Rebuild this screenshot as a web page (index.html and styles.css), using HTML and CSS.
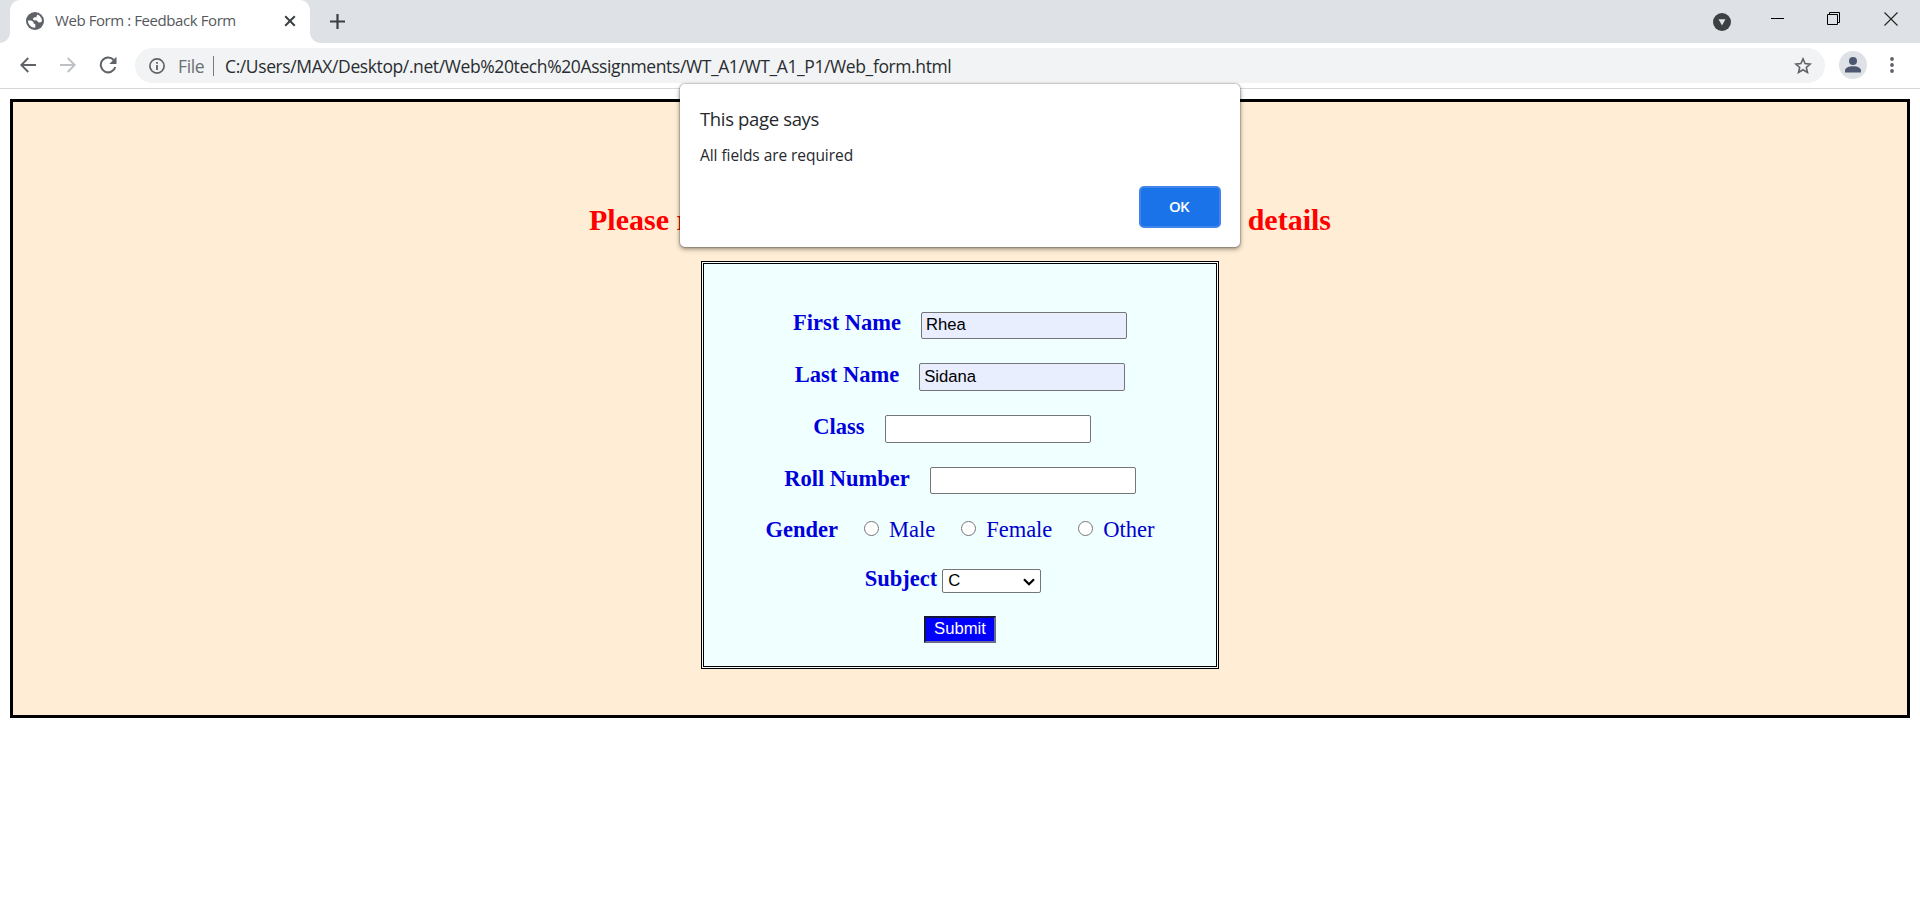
FILE: index.html
```html
<!DOCTYPE html>
<html lang="en">
<head>
<meta charset="utf-8">
<title>Web Form : Feedback Form</title>
<link rel="stylesheet" href="styles.css">
</head>
<body>
<header class="tabstrip">
  <div class="tab">
    <svg class="globe" width="18" height="18" viewBox="0 0 18 18"><circle cx="9" cy="9" r="9" fill="#5f6368"/><path d="M2 8.600h3.200l2.300 1.500v1.500l1.800.3v3.900C5 15.900 1.900 12.600 2 8.600zM11.300 2.400c2.900 1.100 4.800 3.600 4.700 6.900l-1.800 1.300-2.100-.4-1.100-1.700-3.300-.2-.9-1.500 1.500-1.600 2.100.1.300-1.500z" fill="#fff"/></svg>
    <span class="tab-title">Web Form : Feedback Form</span>
    <svg class="tab-close" width="12" height="12" viewBox="0 0 12 12"><path d="M1.200 1.200l9.600 9.600M10.800 1.200L1.200 10.800" stroke="#3c4043" stroke-width="2"/></svg>
  </div>
  <svg class="newtab" width="15" height="15" viewBox="0 0 15 15"><path d="M7.500 0v15M0 7.500h15" stroke="#3c4043" stroke-width="2.200"/></svg>
  <div class="controls">
    <svg width="18" height="18" viewBox="0 0 18 18"><circle cx="9" cy="9" r="9" fill="#3c4043"/><path d="M5.500 6.200h7L9 12.500z" fill="#dee1e6"/></svg>
    <svg class="minimize" width="13" height="13" viewBox="0 0 13 13"><path d="M0 6.500h13" stroke="#000"/></svg>
    <svg class="restore" width="13" height="13" viewBox="0 0 13 13"><path d="M.5 2.500h10v10H.5zM2.500 2.500v-2h10v10h-2" fill="none" stroke="#000"/></svg>
    <svg class="close" width="14" height="14" viewBox="0 0 14 14"><path d="M.5.500l13 13M13.500.500l-13 13" stroke="#222" stroke-width="1.100"/></svg>
  </div>
</header>
<nav class="toolbar">
  <svg class="back" width="16" height="16" viewBox="0 0 16 16"><path d="M16 8H1.500M8.300 1L1.300 8l7 7" fill="none" stroke="#5f6368" stroke-width="1.900"/></svg>
  <svg class="forward" width="16" height="16" viewBox="0 0 16 16"><path d="M0 8h14.500M7.700 1l7 7-7 7" fill="none" stroke="#bdc1c6" stroke-width="1.900"/></svg>
  <svg class="reload" width="18" height="18" viewBox="0 0 18 18"><path d="M14.700 4A7.400 7.400 0 1 0 16.300 11" fill="none" stroke="#5f6368" stroke-width="2"/><path d="M17.500.800v7.200h-7.200z" fill="#5f6368"/></svg>
  <div class="omnibox">
    <svg class="info" width="16" height="16" viewBox="0 0 16 16"><circle cx="8" cy="8" r="7.100" fill="none" stroke="#5f6368" stroke-width="1.700"/><path d="M8 7v5M8 3.900v1.800" stroke="#5f6368" stroke-width="1.800"/></svg>
    <span class="scheme">File</span>
    <span class="divider"></span>
    <span class="url">C:/Users/MAX/Desktop/.net/Web%20tech%20Assignments/WT_A1/WT_A1_P1/Web_form.html</span>
    <svg class="star" width="18" height="17" viewBox="0 0 18 17"><path d="M9 1.900l2.100 4.700 5.100.5-3.900 3.400 1.200 5L9 12.800l-4.500 2.700 1.200-5L1.800 7.100l5.100-.5z" fill="none" stroke="#5f6368" stroke-width="1.600"/></svg>
  </div>
  <svg class="avatar" width="28" height="28" viewBox="0 0 28 28"><circle cx="14" cy="14" r="14" fill="#dee1e6"/><circle cx="14" cy="10" r="4" fill="#4d5870"/><path d="M6 21.500v-2c0-2.700 4-4.200 8-4.200s8 1.500 8 4.200v2z" fill="#4d5870"/></svg>
  <svg class="menu" width="4" height="16" viewBox="0 0 4 16"><g fill="#5f6368"><circle cx="2" cy="2" r="1.900"/><circle cx="2" cy="8" r="1.900"/><circle cx="2" cy="14" r="1.900"/></g></svg>
</nav>
<main class="page">
  <h2 class="heading"><span>Please r</span><span>details</span></h2>
  <form class="form">
    <div class="row"><label>First Name</label><input class="field filled first" value="Rhea"></div>
    <div class="row"><label>Last Name</label><input class="field filled" value="Sidana"></div>
    <div class="row class-row"><label>Class</label><input class="field"></div>
    <div class="row roll"><label>Roll Number</label><input class="field short"></div>
    <div class="row gender"><label>Gender</label>
      <span class="option"><i class="radio"></i>Male</span>
      <span class="option"><i class="radio"></i>Female</span>
      <span class="option"><i class="radio"></i>Other</span>
    </div>
    <div class="row subject"><label>Subject</label>
      <div class="select"><span>C</span><svg width="12" height="8" viewBox="0 0 12 8"><path d="M1 1.200l5 5 5-5" fill="none" stroke="#000" stroke-width="2.200"/></svg></div>
    </div>
    <button class="submit" type="button">Submit</button>
  </form>
</main>
<section class="dialog">
  <div class="dialog-title">This page says</div>
  <div class="dialog-text">All fields are required</div>
  <button class="ok" type="button">OK</button>
</section>
</body>
</html>
```

FILE: styles.css
```css
* { box-sizing: border-box; }
body { margin: 0; height: 918px; overflow: hidden; background: #fff; font-family: "Open Sans", sans-serif; }
svg { display: block; flex: none; }
.tabstrip { display: flex; height: 43px; background: #dee1e6; padding-left: 10px; }
.tab { position: relative; display: flex; width: 300px; height: 43px; padding-left: 16px; background: #fff; border-radius: 10px 10px 0 0; }
.tab::before, .tab::after { content: ""; position: absolute; bottom: 0; width: 10px; height: 10px; }
.tab::before { left: -10px; background: radial-gradient(circle at 0 0, #dee1e6 9.500px, #fff 10px); }
.tab::after { right: -10px; background: radial-gradient(circle at 100% 0, #dee1e6 9.500px, #fff 10px); }
.globe { margin-top: 12px; }
.tab-title { margin-left: 11px; width: 218px; font-size: 15px; line-height: 41px; color: #54585c; letter-spacing: -.42px; white-space: nowrap; }
.tab-close { margin-top: 15px; margin-left: 11px; }
.newtab { margin: 14px 0 0 20px; }
.controls { display: flex; margin-left: auto; padding-right: 22px; }
.controls svg { margin-top: 13px; }
.controls .minimize { margin: 12px 0 0 40px; }
.controls .restore { margin: 12px 0 0 43px; }
.controls .close { margin: 12px 0 0 44px; }
.toolbar { display: flex; height: 46px; padding-left: 20px; border-bottom: 1px solid #d5d7da; align-items: flex-start; }
.back, .forward { margin-top: 14px; }
.forward { margin-left: 24px; }
.reload { margin: 13px 0 0 23px; }
.omnibox { display: flex; width: 1690px; height: 35px; margin: 5px 0 0 18px; padding-left: 14px; border-radius: 18px; background: #f1f3f4; font-size: 17.500px; line-height: 36px; }
.info { margin-top: 10px; }
.scheme { width: 34px; margin-left: 13px; color: #6b6f73; letter-spacing: -.4px; }
.divider { width: 1px; height: 20px; margin: 8px 11px 0 1px; background: #777b80; }
.url { color: #292c30; letter-spacing: -.393px; white-space: nowrap; }
.star { margin: 9px 13px 0 auto; }
.avatar { margin: 8px 0 0 14px; }
.menu { margin: 14px 0 0 23px; }
.page { height: 619px; margin: 10px 10px 0; padding-top: 101px; border: 3px solid #000; background: #ffeed5; font-family: "Liberation Serif", serif; }
.heading { display: flex; justify-content: space-between; width: 742px; height: 34px; margin: 0 auto 24px; font-size: 30px; line-height: 34px; color: #f00; }
.form { display: flex; flex-direction: column; width: 518px; height: 408px; margin: 0 auto; padding-top: 46px; border: 3px double #000; background: #f0ffff; color: #0000cd; font-size: 22.500px; line-height: 26px; }
.row { display: flex; justify-content: center; align-items: flex-start; height: 52px; }
.row label { font-weight: bold; color: #0000dc; }
.field { width: 206px; height: 28px; margin: 1px 0 0 20px; padding: 0 5px 0 4px; border: 1px solid #767676; border-radius: 2px; background: #fff; font: 16.670px "Liberation Sans", sans-serif; color: #000; outline: none; }
.first { height: 27px; margin-top: 2px; padding-bottom: 2px; }
.short { height: 27px; }
.filled { background: #e8eefe; }
.class-row { padding-right: 16px; }
.roll { height: 51px; }
.gender { height: 49px; }
.option { display: flex; margin-left: 26px; gap: 10px; }
.radio { width: 15px; height: 15px; margin-top: 4px; border: 1px solid #767676; border-radius: 50%; background: #fff; }
.subject { height: 50px; padding-right: 14px; }
.select { display: flex; justify-content: space-between; width: 99px; height: 24px; margin: 3px 0 0 5px; padding: 0 5px; border: 1px solid #767676; border-radius: 2px; background: #fff; font: 16.670px/21px "Liberation Sans", sans-serif; color: #000; }
.select svg { margin-top: 8px; }
.submit { align-self: center; width: 72px; height: 27px; padding: 0 0 2px; border: 2px solid; border-color: #17173a #6b6b8c #6b6b8c #17173a; background: #00f; color: #fff; font: 16.670px "Liberation Sans", sans-serif; }
.dialog { position: absolute; left: 680px; top: 84px; display: flex; flex-direction: column; width: 560px; height: 163px; padding: 20px 19px 0 20px; border-radius: 5px; background: #fff; box-shadow: 0 0 1px 1px rgba(0,0,0,.17), 0 2px 5px rgba(0,0,0,.45); color: #25282c; }
.dialog-title { font-size: 18.500px; line-height: 30px; letter-spacing: -.35px; }
.dialog-text { margin-top: 9px; font-size: 15.500px; line-height: 24px; letter-spacing: -.06px; }
.ok { align-self: flex-end; width: 82px; height: 42px; margin-top: 19px; padding: 0 2px 2px 0; border: 2px solid #4285ea; border-radius: 5px; background: #1a73e8; color: #fff; font: 600 15px "Open Sans", sans-serif; letter-spacing: -.8px; }
```
